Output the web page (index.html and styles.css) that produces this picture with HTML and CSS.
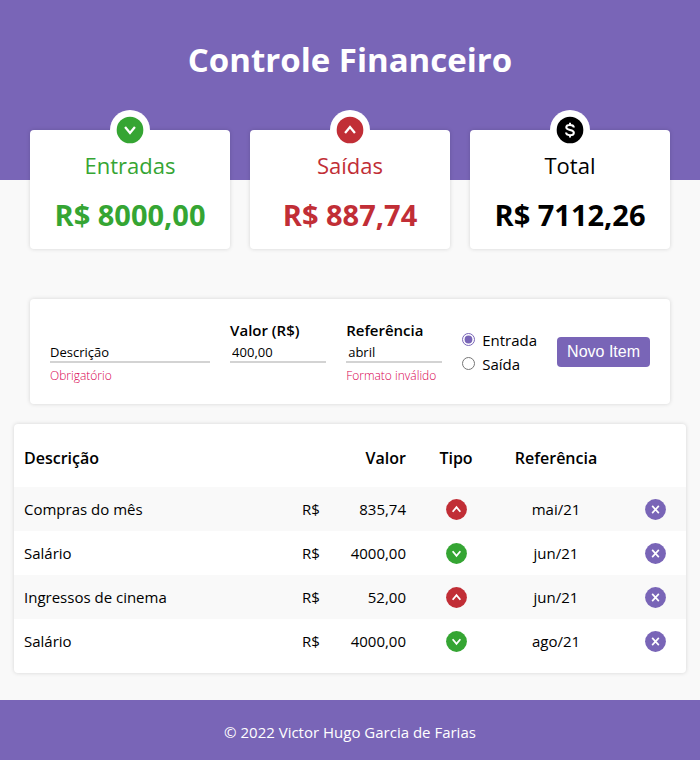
FILE: index.html
```html
<!DOCTYPE html>
<html lang="pt-BR">
<head>
<meta charset="utf-8">
<meta name="viewport" content="width=device-width, initial-scale=1">
<title>Controle Financeiro</title>
<link rel="stylesheet" href="styles.css">
</head>
<body>
<svg class="sprite" aria-hidden="true">
  <symbol id="down" viewBox="0 0 24 24"><circle cx="12" cy="12" r="10" fill="currentColor"/><path d="M8.300 9.800l3.700 4.400 3.700-4.400" fill="none" stroke="#fff" stroke-width="1.700"/></symbol>
  <symbol id="up" viewBox="0 0 24 24"><circle cx="12" cy="12" r="10" fill="currentColor"/><path d="M8.300 14.200L12 9.800l3.700 4.400" fill="none" stroke="#fff" stroke-width="1.700"/></symbol>
  <symbol id="dollar" viewBox="0 0 24 24"><circle cx="12" cy="12" r="10" fill="currentColor"/><path d="M14.900 10.100C14.800 8.800 13.600 8.200 12 8.200c-1.700 0-2.800.7-2.800 1.800 0 2.700 5.700 1.300 5.700 4 0 1.200-1.200 1.900-2.900 1.900-1.800 0-2.900-.8-3-2M12 6.600v1.800M12 15.600v2" fill="none" stroke="#fff" stroke-width="1.500"/></symbol>
  <symbol id="close" viewBox="0 0 24 24"><circle cx="12" cy="12" r="10" fill="currentColor"/><path d="M8.800 8.500l6.400 7M15.200 8.500l-6.400 7" fill="none" stroke="#fff" stroke-width="1.600"/></symbol>
</svg>
<header class="header"><h1>Controle Financeiro</h1></header>
<main>
  <section class="cards">
    <article class="card income"><span class="badge"><svg><use href="#down"/></svg></span><h2>Entradas</h2><p>R$ 8000,00</p></article>
    <article class="card expense"><span class="badge"><svg><use href="#up"/></svg></span><h2>Saídas</h2><p>R$ 887,74</p></article>
    <article class="card"><span class="badge"><svg><use href="#dollar"/></svg></span><h2>Total</h2><p>R$ 7112,26</p></article>
  </section>
  <form class="form">
    <div class="field wide"><input id="description" type="text" placeholder="Descrição" aria-label="Descrição"><small>Obrigatório</small></div>
    <div class="field"><label for="amount">Valor (R$)</label><input id="amount" type="text" value="400,00"><small></small></div>
    <div class="field"><label for="reference">Referência</label><input id="reference" type="text" value="abril"><small>Formato inválido</small></div>
    <div class="options">
      <label><input type="radio" name="type" checked>Entrada</label>
      <label><input type="radio" name="type">Saída</label>
    </div>
    <button class="add" type="button">Novo Item</button>
  </form>
  <section class="panel">
    <table>
      <colgroup><col><col class="currency"><col class="value"><col class="type"><col class="month"><col class="action"></colgroup>
      <thead><tr><th class="left">Descrição</th><th></th><th class="right">Valor</th><th>Tipo</th><th>Referência</th><th></th></tr></thead>
      <tbody>
        <tr><td class="left">Compras do mês</td><td>R$</td><td class="right">835,74</td><td class="expense"><svg><use href="#up"/></svg></td><td>mai/21</td><td><button class="remove" type="button" aria-label="Remover"><svg><use href="#close"/></svg></button></td></tr>
        <tr><td class="left">Salário</td><td>R$</td><td class="right">4000,00</td><td class="income"><svg><use href="#down"/></svg></td><td>jun/21</td><td><button class="remove" type="button" aria-label="Remover"><svg><use href="#close"/></svg></button></td></tr>
        <tr><td class="left">Ingressos de cinema</td><td>R$</td><td class="right">52,00</td><td class="expense"><svg><use href="#up"/></svg></td><td>jun/21</td><td><button class="remove" type="button" aria-label="Remover"><svg><use href="#close"/></svg></button></td></tr>
        <tr><td class="left">Salário</td><td>R$</td><td class="right">4000,00</td><td class="income"><svg><use href="#down"/></svg></td><td>ago/21</td><td><button class="remove" type="button" aria-label="Remover"><svg><use href="#close"/></svg></button></td></tr>
      </tbody>
    </table>
  </section>
</main>
<footer class="footer">© 2022 Victor Hugo Garcia de Farias</footer>
</body>
</html>
```
FILE: styles.css
```css
* { box-sizing: border-box; margin: 0; padding: 0; }
body {
  min-height: 100vh;
  display: flex;
  flex-direction: column;
  background: #f9f9f9;
  color: #000;
  font: 400 15px/24px "Open Sans", "Noto Sans", sans-serif;
}
.sprite { position: absolute; width: 0; height: 0; }
.header { height: 180px; padding-top: 36px; background: #7965b7; color: #fff; text-align: center; }
h1 { font-size: 33px; line-height: 48px; font-weight: 700; }
main { flex: 1; padding: 0 14px 27px; }
.cards { display: grid; grid-template-columns: repeat(3, 1fr); gap: 20px; margin: -50px 16px 0; }
.card, .form, .panel { background: #fff; border-radius: 4px; box-shadow: 0 0 4px rgba(0, 0, 0, .15); }
.card { position: relative; padding: 19px 8px 14px; text-align: center; }
.card h2 { font-size: 22px; line-height: 32px; font-weight: 500; }
.card p { margin-top: 14px; font-size: 29px; line-height: 40px; font-weight: 700; }
.badge {
  position: absolute;
  top: -20px;
  left: calc(50% - 20px);
  width: 40px;
  height: 40px;
  padding: 4px;
  border-radius: 50%;
  background: #fff;
}
svg { display: block; width: 100%; height: 100%; }
.income { color: #35a533; }
.expense { color: #c12e36; }
.form {
  display: flex;
  align-items: center;
  gap: 20px;
  margin: 50px 16px 20px;
  padding: 19px 20px;
}
.field { display: flex; flex-direction: column; flex: 96 1 0; min-width: 0; align-self: flex-end; }
.field.wide { flex-grow: 160; }
.field label { font-size: 15px; line-height: 24px; font-weight: 600; white-space: nowrap; }
.field input {
  width: 100%;
  height: 21px;
  padding: 0 2px;
  border: 0;
  border-bottom: 2px solid #d3d3d3;
  outline: 0;
  background: transparent;
  color: #000;
  font: 400 13px/18px "Open Sans", sans-serif;
}
.field.wide input { padding: 0; }
.field input::placeholder { color: #000; opacity: 1; }
.field small { height: 18px; margin-top: 4px; color: #d8004f; font-size: 12px; line-height: 18px; font-weight: 300; white-space: nowrap; }
.options label { display: flex; align-items: center; gap: 7px; }
.options input { width: 13px; height: 13px; accent-color: #7965b7; }
.add {
  height: 30px;
  padding: 0 10px;
  border: 0;
  border-radius: 4px;
  background: #7965b7;
  color: #fff;
  font: 16px/30px "Liberation Sans", sans-serif;
  white-space: nowrap;
}
.panel { padding: 10px 0; }
table { width: 100%; border-collapse: collapse; table-layout: fixed; }
th { height: 53px; padding: 0 10px 6px; font-size: 16px; font-weight: 600; text-align: center; }
td { height: 44px; padding: 0 10px; text-align: center; }
.left { text-align: left; }
.right { text-align: right; }
.currency { width: 50px; }
.value { width: 80px; }
.type { width: 80px; }
.month { width: 120px; }
.action { width: 70px; }
td:last-child { padding: 0 18px; }
tbody tr:nth-child(odd) { background: #f9f9f9; }
td svg { width: 25px; height: 25px; margin: 0 auto; }
.remove { display: block; margin-left: auto; border: 0; background: none; color: #7965b7; }
.footer { padding: 20px 18px 16px; background: #7965b7; color: #fff; text-align: center; }
```
